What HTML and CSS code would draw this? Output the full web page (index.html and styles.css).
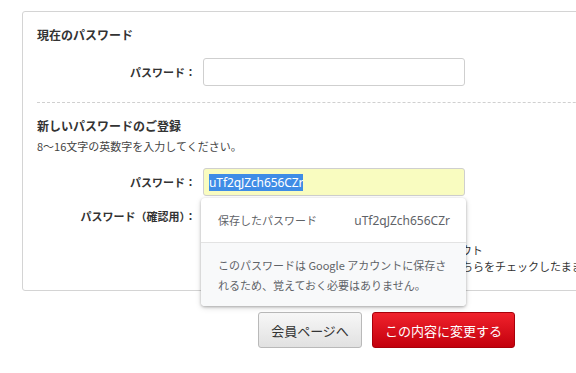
FILE: index.html
```html
<!DOCTYPE html>
<html lang="ja">
<head>
<meta charset="utf-8">
<title>パスワード変更</title>
<link rel="stylesheet" href="styles.css">
</head>
<body>
<div class="page">
  <form class="card">
    <section class="block">
      <h3 class="block-title">現在のパスワード</h3>
      <div class="row">
        <label class="row-label">パスワード：</label>
        <div class="field"><input class="input" type="password"></div>
      </div>
    </section>
    <section class="block block-new">
      <h3 class="block-title">新しいパスワードのご登録</h3>
      <p class="note">8～16文字の英数字を入力してください。</p>
      <div class="row">
        <label class="row-label">パスワード：</label>
        <div class="field">
          <div class="input input-autofill"><span class="selected">uTf2qJZch656CZr</span></div>
          <div class="popup">
            <div class="popup-top">
              <span>保存したパスワード</span>
              <span class="popup-value">uTf2qJZch656CZr</span>
            </div>
            <div class="popup-bottom">このパスワードは Google アカウントに保存さ<br>れるため、覚えておく必要はありません。</div>
          </div>
        </div>
      </div>
      <div class="row row-confirm">
        <label class="row-label">パスワード（確認用）：</label>
        <div class="field"><input class="input" type="password"></div>
      </div>
      <div class="row row-check">
        <span class="row-label"></span>
        <label class="check">
          <span class="box"></span>
          <span class="check-text">パスワード変更後、他のすべての端末からログアウト<br>※他端末でログイン状態を維持したい場合は、こちらをチェックしたままにしてください。</span>
        </label>
      </div>
    </section>
  </form>
  <div class="actions">
    <button class="btn btn-gray" type="button">会員ページへ</button>
    <button class="btn btn-red" type="button">この内容に変更する</button>
  </div>
</div>
</body>
</html>
```
FILE: styles.css
```css
html, body {
  margin: 0;
  padding: 0;
  overflow: hidden;
  background: #fff;
}
body {
  font-family: "Noto Sans CJK JP", "Noto Sans", sans-serif;
  color: #333;
  width: 576px;
  height: 373px;
}
.page {
  padding: 11px 0 0 22px;
  width: 760px;
}
.card {
  box-sizing: border-box;
  width: 729px;
  border: 1px solid #d4d4d4;
  border-radius: 3px;
  padding: 14px 14px 16px 14px;
}
.block-title {
  margin: 0;
  font-size: 12px;
  line-height: 18px;
  font-weight: bold;
  color: #333;
}
.block > .block-title + .row {
  margin-top: 14px;
}
.block-new {
  margin-top: 16px;
  border-top: 1px dashed #d0d0d0;
  padding-top: 14px;
}
.note {
  margin: 3px 0 14px;
  font-size: 11px;
  line-height: 16px;
  color: #444;
}
.row {
  display: flex;
  align-items: center;
  gap: 7px;
}
.row-label {
  width: 159px;
  flex: none;
  text-align: right;
  font-size: 11px;
  font-weight: bold;
  color: #333;
}
.field {
  position: relative;
}
.input {
  box-sizing: border-box;
  display: block;
  width: 262px;
  height: 28px;
  margin: 0;
  border: 1px solid #cfcfcf;
  border-radius: 3px;
  background: #fff;
  padding: 0 5px;
}
.input-autofill {
  background: #f9fcc0;
  display: flex;
  align-items: center;
  font-family: "Noto Sans", sans-serif;
  font-size: 12px;
  color: #fff;
}
.selected {
  background: #3f8ce6;
  line-height: 17px;
  padding: 0;
  letter-spacing: -0.1px;
}
.row-confirm {
  margin-top: 6px;
}
.row-check {
  margin-top: 12px;
  align-items: flex-start;
}
.check {
  display: flex;
  align-items: flex-start;
  gap: 4px;
  white-space: nowrap;
}
.box {
  width: 11px;
  height: 11px;
  border: 1px solid #888;
  border-radius: 2px;
  margin-top: 2px;
  flex: none;
}
.check-text {
  font-size: 11px;
  line-height: 16px;
  color: #333;
}
.popup {
  position: absolute;
  left: -2px;
  top: 30px;
  width: 265px;
  border-radius: 4px;
  overflow: hidden;
  background: #fff;
  box-shadow: 0 1px 3px rgba(0,0,0,0.28), 0 2px 6px rgba(0,0,0,0.12);
  z-index: 5;
}
.popup-top {
  height: 44px;
  display: flex;
  align-items: center;
  justify-content: space-between;
  padding: 0 16px 0 17px;
  font-size: 11px;
  color: #5f6368;
  border-bottom: 1px solid #e3e3e3;
}
.popup-value {
  font-family: "Noto Sans", sans-serif;
  font-size: 12px;
}
.popup-bottom {
  background: #f8f9fa;
  padding: 12px 17px 11px;
  font-size: 11px;
  line-height: 20px;
  color: #5f6368;
  white-space: nowrap;
}
.actions {
  width: 729px;
  display: flex;
  justify-content: center;
  gap: 10px;
  margin-top: 21px;
}
.btn {
  box-sizing: border-box;
  height: 36px;
  border-radius: 3px;
  font-family: "Noto Sans CJK JP", sans-serif;
  font-size: 13px;
  padding: 0;
  cursor: pointer;
}
.btn-gray {
  width: 104px;
  background: linear-gradient(#f7f7f7, #e1e1e1);
  border: 1px solid #b9b9b9;
  color: #333;
}
.btn-red {
  width: 143px;
  background: linear-gradient(#f0222c, #c3000d);
  border: 1px solid #a8000a;
  color: #fff;
}
```
